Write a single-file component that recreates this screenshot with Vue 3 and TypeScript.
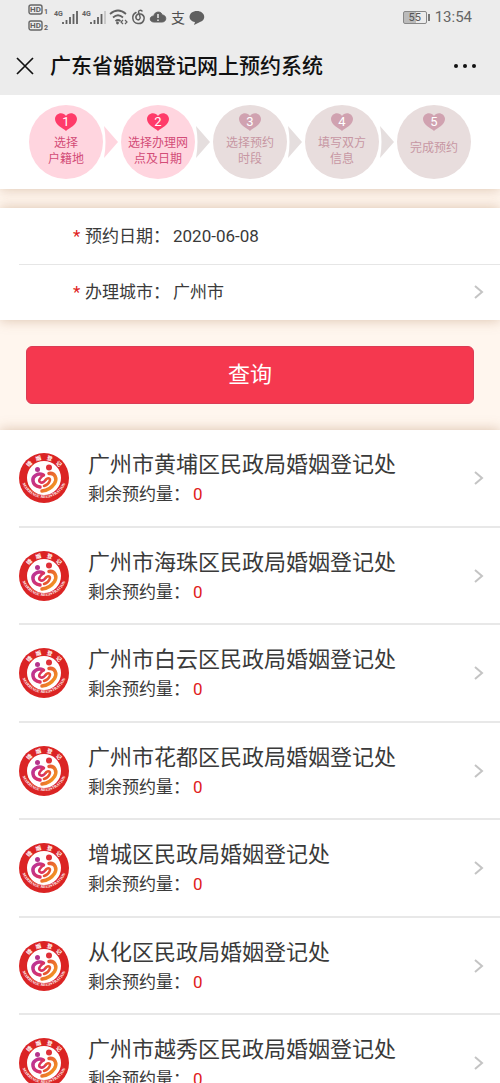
<script setup lang="ts">
interface Step {
  lines: string[]
  active: boolean
}

interface Office {
  name: string
  remaining: number
}

const steps: Step[] = [
  { lines: ['选择', '户籍地'], active: true },
  { lines: ['选择办理网', '点及日期'], active: true },
  { lines: ['选择预约', '时段'], active: false },
  { lines: ['填写双方', '信息'], active: false },
  { lines: ['完成预约'], active: false },
]

const offices: Office[] = [
  { name: '广州市黄埔区民政局婚姻登记处', remaining: 0 },
  { name: '广州市海珠区民政局婚姻登记处', remaining: 0 },
  { name: '广州市白云区民政局婚姻登记处', remaining: 0 },
  { name: '广州市花都区民政局婚姻登记处', remaining: 0 },
  { name: '增城区民政局婚姻登记处', remaining: 0 },
  { name: '从化区民政局婚姻登记处', remaining: 0 },
  { name: '广州市越秀区民政局婚姻登记处', remaining: 0 },
]
</script>

<template>
  <div class="page">
    <svg class="defs" aria-hidden="true">
      <defs>
        <path id="arc-bottom" d="M4 44 A46 46 0 0 0 96 44" fill="none" />
        <linearGradient id="swirl-left" x1="0" y1="0" x2="1" y2="1">
          <stop offset="0" stop-color="#b8359a" />
          <stop offset="1" stop-color="#e0305a" />
        </linearGradient>
        <linearGradient id="swirl-right" x1="0" y1="0" x2="1" y2="1">
          <stop offset="0" stop-color="#e2403a" />
          <stop offset="1" stop-color="#f5a51d" />
        </linearGradient>
      </defs>
    </svg>

    <header class="top">
      <div class="status">
        <svg class="status-icons" width="180" height="28" viewBox="0 0 180 28" aria-hidden="true">
          <g fill="none" stroke="#666" stroke-width="1.4">
            <rect x="1" y="2" width="13" height="9" rx="2" />
            <rect x="1" y="18" width="13" height="9" rx="2" />
          </g>
          <g fill="#606060" font-weight="700">
            <text x="2" y="9" font-size="8">HD</text>
            <text x="2" y="25" font-size="8">HD</text>
            <text x="16" y="11" font-size="7">1</text>
            <text x="16" y="27" font-size="7">2</text>
            <text x="26" y="13" font-size="7">4G</text>
            <text x="54" y="13" font-size="7">4G</text>
          </g>
          <g stroke="#606060" stroke-width="1.8">
            <path d="M35 21v-2M38.500 21v-4M42 21v-7M45.500 21v-10M49 21v-13" />
            <path d="M63 21v-2M66.500 21v-4M70 21v-7M73.500 21v-10" />
            <path d="M77 21v-13" stroke="#c8c8c8" />
          </g>
          <path d="M82 11Q90 4 98 11M85 14.500Q90 10 95 14.500M87.500 18Q90 16 92.500 18" fill="none" stroke="#606060" stroke-width="1.7" />
          <circle cx="89.500" cy="20" r="1.400" fill="#606060" />
          <path d="M95 17l-2 2 2 2M97 17l2 2-2 2" fill="none" stroke="#606060" stroke-width="1.2" />
          <path d="M108 9.500C103 12 104 20 110 20.500C116 21 118 14 114 11.500C110 9.500 106.500 13 108.500 16C110.500 18 113 16 112 13.500L110.500 9C110.500 7 113 7 114 8" fill="none" stroke="#606060" stroke-width="1.5" stroke-linecap="round" />
          <path d="M126 19C121 19 121 13 126 13C126 8 134 8 134 12C139 12 139 19 134 19Z" fill="#606060" stroke="#606060" stroke-width="1" />
          <path d="M130 11v4M130 16.500v1.500" stroke="#ececec" stroke-width="1.500" />
          <text class="pay-glyph" x="143" y="20" font-size="14" font-weight="400" fill="#505050">支</text>
          <path d="M169 8C160 8 159 18 167 19L166 22L172 19C179 17 177 8 169 8Z" fill="#606060" />
        </svg>
        <div class="status-right">
          <span class="battery"><span>55</span></span>
          <time>13:54</time>
        </div>
      </div>
      <div class="nav">
        <button class="icon-button" type="button" aria-label="关闭">
          <svg width="18" height="18" viewBox="0 0 18 18"><path d="M1 1L17 17M17 1L1 17" stroke="#111" stroke-width="1.700" fill="none" /></svg>
        </button>
        <h1>广东省婚姻登记网上预约系统</h1>
        <button class="icon-button more" type="button" aria-label="更多">
          <svg width="22" height="6" viewBox="0 0 22 6"><g fill="#111"><circle cx="2" cy="3" r="2" /><circle cx="11" cy="3" r="2" /><circle cx="20" cy="3" r="2" /></g></svg>
        </button>
      </div>
    </header>

    <ol class="steps card">
      <template v-for="(step, i) in steps" :key="i">
        <li class="step" :class="{ active: step.active }">
          <span class="heart">
            <svg width="22" height="18" viewBox="0 0 22 18" aria-hidden="true"><path d="M11 18C8 15 0 12 0 6C0 0 8 -2 11 3C14 -2 22 0 22 6C22 12 14 15 11 18Z" /></svg>
            <b>{{ i + 1 }}</b>
          </span>
          <span class="step-text">
            <span v-for="line in step.lines" :key="line">{{ line }}</span>
          </span>
        </li>
        <li v-if="i < steps.length - 1" class="arrow" :class="{ active: i === 0 }" aria-hidden="true">
          <svg width="18" height="34" viewBox="0 0 18 34"><path d="M1 1L15 17L1 33Q4 17 1 1Z" /></svg>
        </li>
      </template>
    </ol>

    <form class="query" @submit.prevent>
      <div class="fields card">
        <div class="field">
          <i>*</i><span class="label">预约日期：</span><span>2020-06-08</span>
        </div>
        <button class="field" type="button">
          <i>*</i><span class="label">办理城市：</span><span>广州市</span>
          <svg class="chevron" width="10" height="14" viewBox="0 0 10 14" aria-hidden="true"><path d="M1 1L8 7L1 13" /></svg>
        </button>
      </div>
      <button class="submit" type="submit">查询</button>
    </form>

    <ul class="offices card">
      <li v-for="office in offices" :key="office.name">
        <a class="office" href="#">
          <svg class="emblem" width="50" height="50" viewBox="0 0 100 100" aria-hidden="true">
            <circle cx="50" cy="50" r="50" fill="#db2424" />
            <circle cx="50" cy="50" r="34" fill="#fff" />
            <g class="emblem-cn" font-size="11" fill="#fff" text-anchor="middle">
              <text transform="rotate(-46 50 50)" x="50" y="13">婚</text>
              <text transform="rotate(-16 50 50)" x="50" y="13">姻</text>
              <text transform="rotate(16 50 50)" x="50" y="13">登</text>
              <text transform="rotate(46 50 50)" x="50" y="13">记</text>
            </g>
            <text class="emblem-en" font-size="8" fill="#fff" text-anchor="middle">
              <textPath href="#arc-bottom" startOffset="50%">MARRIAGE REGISTRATION</textPath>
            </text>
            <circle cx="37" cy="33" r="5" fill="#b5348c" />
            <circle cx="60" cy="29" r="6" fill="#df3038" />
            <g fill="none" stroke-linecap="round">
              <path d="M49 44C38 39 26 46 28 56C29 63 35 67 42 68" stroke="url(#swirl-left)" stroke-width="7" />
              <path d="M49 44C42 50 38 55 42 58C46 61 51 57 54 53" stroke="#d9345f" stroke-width="5" />
              <path d="M60 41C72 39 77 51 71 61C65 70 56 75 46 76" stroke="url(#swirl-right)" stroke-width="7" />
              <path d="M54 53C58 48 64 51 61 57C59 62 54 65 50 66" stroke="#e8562f" stroke-width="5" />
            </g>
          </svg>
          <span class="office-info">
            <span class="office-name">{{ office.name }}</span>
            <span class="office-count">剩余预约量：<em>{{ office.remaining }}</em></span>
          </span>
          <svg class="chevron" width="10" height="14" viewBox="0 0 10 14" aria-hidden="true"><path d="M1 1L8 7L1 13" /></svg>
        </a>
      </li>
    </ul>
  </div>
</template>

<style>
body {
  margin: 0;
  background: #fff6ee;
}
</style>

<style scoped>
.page {
  height: 100vh;
  overflow: hidden;
  background: #fff6ee;
  color: #3a3a3a;
  font-family: Roboto, "Noto Sans CJK SC", sans-serif;
}

.page * {
  box-sizing: border-box;
}

button {
  border: 0;
  padding: 0;
  background: none;
  color: inherit;
  font: inherit;
  text-align: left;
}

.defs {
  position: absolute;
  width: 0;
  height: 0;
}

.emblem-cn {
  font-family: "Noto Sans CJK SC", sans-serif;
  font-weight: 700;
}

.emblem-en {
  font-family: "Liberation Serif", serif;
  font-weight: 700;
}

.card {
  position: relative;
  background: #fff;
  box-shadow: 0 0 12px rgba(150, 95, 50, 0.35);
}

.top {
  position: relative;
  z-index: 1;
  height: 95px;
  background: #ececec;
}

.status {
  display: flex;
  justify-content: space-between;
  align-items: flex-start;
  height: 36px;
  padding: 3px 28px 0;
}

.status-right {
  display: flex;
  align-items: center;
  gap: 8px;
  height: 28px;
  color: #666;
  font-size: 15px;
}

.battery {
  position: relative;
  width: 24px;
  height: 13px;
  border: 1px solid #888;
  border-radius: 2px;
  background: linear-gradient(90deg, #bbb 55%, #ececec 55%);
  color: #555;
  font-size: 11px;
  line-height: 11px;
  text-align: center;
}

.battery::after {
  content: "";
  position: absolute;
  top: 2px;
  right: -4px;
  width: 2px;
  height: 7px;
  background: #777;
}

.nav {
  display: flex;
  align-items: center;
  height: 59px;
  padding: 0 24px 0 16px;
}

.nav h1 {
  flex: 1;
  margin: 0 0 0 16px;
  color: #111;
  font-size: 21px;
  font-weight: 500;
  line-height: 30px;
}

.icon-button {
  display: flex;
}

.steps {
  display: flex;
  justify-content: center;
  align-items: center;
  height: 94px;
  margin: 0;
  padding: 0;
  list-style: none;
}

.step {
  display: flex;
  flex-direction: column;
  align-items: center;
  width: 74px;
  height: 74px;
  padding-top: 8px;
  border-radius: 50%;
  background: #e8dddd;
  color: #c797a3;
  font-size: 12px;
  line-height: 16px;
  white-space: nowrap;
}

.step.active {
  background: #ffd5df;
  color: #d34c77;
}

.heart {
  display: grid;
  place-items: center;
  height: 18px;
}

.heart > * {
  grid-area: 1 / 1;
}

.heart svg {
  fill: #d0a2b0;
}

.active .heart svg {
  fill: #ff3b69;
}

.heart b {
  color: #fff;
  font-size: 13px;
  font-weight: 400;
  line-height: 18px;
}

.step-text {
  display: flex;
  flex-direction: column;
  justify-content: center;
  align-items: center;
  height: 34px;
  margin-top: 3px;
}

.step:last-child .step-text {
  height: 28px;
}

.arrow {
  display: flex;
  width: 18px;
  fill: #e5dede;
}

.arrow.active {
  fill: #ffd5df;
}

.fields {
  margin-top: 19px;
}

.field {
  position: relative;
  display: flex;
  align-items: center;
  width: 100%;
  height: 56px;
  padding: 0 16px 0 73px;
  font-size: 17px;
  line-height: 24px;
}

.field + .field::before {
  content: "";
  position: absolute;
  top: 0;
  right: 0;
  left: 19px;
  height: 1px;
  background: #e6e6e6;
}

.field i {
  width: 12px;
  color: #e02020;
  font-style: normal;
}

.label {
  margin-right: 3px;
}

.chevron {
  flex: none;
  margin-left: auto;
  fill: none;
  stroke: #c4c4c4;
  stroke-width: 2;
}

.submit {
  display: block;
  width: calc(100% - 52px);
  height: 58px;
  margin: 26px;
  border: 1px solid #da3c55;
  border-radius: 6px;
  background: #f5384f;
  color: #fff;
  font-size: 22px;
  line-height: 30px;
  text-align: center;
}

.offices {
  margin: 0;
  padding: 0;
  list-style: none;
}

.office {
  display: flex;
  align-items: center;
  height: 96px;
  padding: 0 16px 0 19px;
  color: inherit;
  text-decoration: none;
}

.offices li:nth-child(even) .office {
  height: 95px;
}

.offices li::after {
  content: "";
  display: block;
  height: 2px;
  margin-left: 19px;
  background: #e8e8e8;
}

.emblem {
  flex: none;
}

.office-info {
  display: flex;
  flex-direction: column;
  margin-left: 19px;
}

.office-name {
  font-size: 22px;
  line-height: 32px;
}

.office-count {
  font-size: 17px;
  line-height: 26px;
}

.office-count em {
  margin-left: 3px;
  color: #e02020;
  font-style: normal;
}
</style>
